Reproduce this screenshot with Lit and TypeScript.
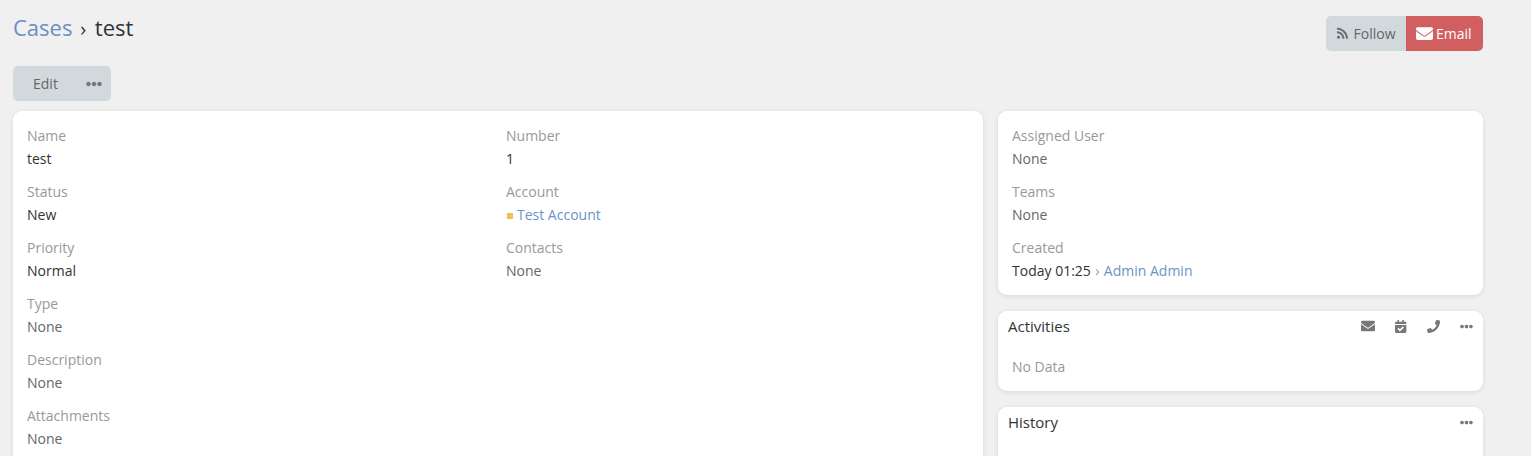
import { LitElement, html, css, svg } from "lit";
import { customElement } from "lit/decorators.js";

const ICON = {
  rss: { vb: "0 0 448 512", d: "M128.081 415.959c0 35.369-28.672 64.041-64.041 64.041S0 451.328 0 415.959s28.672-64.041 64.041-64.041 64.04 28.673 64.04 64.041zm175.66 47.25c-8.354-154.6-132.185-278.587-286.95-286.95C7.656 175.765 0 183.105 0 192.253v48.069c0 8.415 6.49 15.472 14.887 16.018 111.832 7.284 201.473 96.702 208.772 208.772.547 8.397 7.604 14.887 16.018 14.887h48.069c9.149.001 16.489-7.655 15.995-16.79zm144.249.288C439.596 229.677 251.465 40.445 16.503 32.01 7.473 31.686 0 38.981 0 48.016v48.068c0 8.625 6.835 15.645 15.453 15.999 191.179 7.839 344.627 161.316 352.465 352.465.353 8.618 7.373 15.453 15.999 15.453h48.068c9.034-.001 16.329-7.474 16.005-16.504z" },
  envelope: { vb: "0 0 512 512", d: "M502.3 190.8c3.9-3.1 9.7-.2 9.7 4.7V400c0 26.5-21.5 48-48 48H48c-26.5 0-48-21.5-48-48V195.6c0-5 5.7-7.8 9.7-4.7 22.4 17.4 52.1 39.5 154.1 113.6 21.1 15.4 56.7 47.8 92.2 47.6 35.7.3 72-32.8 92.3-47.6 102-74.1 131.6-96.3 154-113.7zM256 320c23.2.4 56.6-29.2 73.4-41.4 132.7-96.3 142.8-104.7 173.4-128.7 5.8-4.5 9.2-11.5 9.2-18.9v-19c0-26.5-21.5-48-48-48H48C21.5 64 0 85.5 0 112v19c0 7.4 3.4 14.3 9.2 18.9 30.6 23.9 40.7 32.4 173.4 128.7 16.8 12.2 50.2 41.8 73.4 41.4z" },
  phone: { vb: "0 0 512 512", d: "M493.4 24.6l-104-24c-11.3-2.6-22.9 3.3-27.5 13.9l-48 112c-4.2 9.8-1.4 21.3 6.9 28l60.6 49.6c-36 76.7-98.9 140.5-177.2 177.2l-49.6-60.6c-6.8-8.3-18.2-11.1-28-6.9l-112 48C3.9 366.5-2 378.1.6 389.4l24 104C27.1 504.2 36.7 512 48 512c256.1 0 464-207.5 464-464 0-11.2-7.7-20.9-18.6-23.4z" },
  calendar: { vb: "0 0 448 512", d: "M436 160H12c-6.627 0-12-5.373-12-12v-36c0-26.51 21.49-48 48-48h48V12c0-6.627 5.373-12 12-12h40c6.627 0 12 5.373 12 12v52h128V12c0-6.627 5.373-12 12-12h40c6.627 0 12 5.373 12 12v52h48c26.51 0 48 21.49 48 48v36c0 6.627-5.373 12-12 12zM12 192h424c6.627 0 12 5.373 12 12v260c0 26.51-21.49 48-48 48H48c-26.51 0-48-21.49-48-48V204c0-6.627 5.373-12 12-12zm333.296 95.947l-28.169-28.398c-4.667-4.705-12.265-4.736-16.97-.068L194.12 364.665l-45.98-46.352c-4.667-4.705-12.266-4.736-16.971-.068l-28.397 28.17c-4.705 4.667-4.736 12.265-.068 16.97l82.601 83.269c4.667 4.705 12.265 4.736 16.97.068l142.953-141.805c4.705-4.667 4.736-12.265.068-16.97z" },
  dots: { vb: "0 0 512 512", d: "M328 256c0 39.8-32.2 72-72 72s-72-32.2-72-72 32.2-72 72-72 72 32.2 72 72zm104-72c-39.8 0-72 32.2-72 72s32.2 72 72 72 72-32.2 72-72-32.2-72-72-72zm-352 0c-39.8 0-72 32.2-72 72s32.2 72 72 72 72-32.2 72-72-32.2-72-72-72z" },
};

function icon(name: keyof typeof ICON, cls: string) {
  const i = ICON[name];
  return html`<svg class=${cls} viewBox=${i.vb} fill="currentColor" aria-hidden="true">${svg`<path d=${i.d}></path>`}</svg>`;
}

@customElement("app-root")
export class AppRoot extends LitElement {
  static styles = css`
    :host {
      display: block;
      height: 456px;
      overflow: hidden;
      background: #f0f0f0;
      font-family: "Open Sans", sans-serif;
      font-size: 14px;
      line-height: 20px;
      color: #333;
    }
    .page { width: 1470px; padding-left: 13px; }
    .top { display: flex; justify-content: space-between; height: 66px; }
    .crumbs { padding-top: 10px; font-size: 22px; line-height: 34px; height: 34px; }
    .crumbs a { color: #6b8fc2; }
    .sep { font-size: 20px; margin: 0 3px 0 2px; }
    .head-btns { display: flex; padding-top: 16px; align-self: flex-start; }
    .btn {
      display: flex; align-items: center; height: 35px; color: #666;
      background: #d1d9dc;
    }
    .follow { border-radius: 5px 0 0 5px; width: 80px; padding-left: 11px; box-sizing: border-box; }
    .email { border-radius: 0 5px 5px 0; width: 77px; padding-left: 10px; box-sizing: border-box; background: #d15f5f; color: #fff; }
    .i-rss { width: 11px; height: 12.6px; margin-right: 5.5px; color: #6d6d6d; }
    .i-env { width: 17px; height: 17px; margin-right: 3px; }
    .edit-row { display: flex; height: 35px; width: 98px; border-radius: 5px; background: #d1d9dc; color: #666; align-items: center; margin-bottom: 10px; }
    .edit { margin-left: 20px; width: 53px; }
    .i-dots { width: 16px; height: 16px; color: #777; }
    .cols { display: grid; grid-template-columns: 970px 485px; column-gap: 15px; align-items: start; }
    .panel { background: #fff; border-radius: 9px; box-shadow: 0 1px 5px rgba(0,0,0,.1); }
    .main { display: grid; grid-template-columns: 479px 1fr; padding: 14px; height: 420px; box-sizing: border-box; }
    .side { display: flex; flex-direction: column; gap: 16px; }
    .field { height: 56px; }
    .label { color: #999; height: 23px; line-height: 22px; }
    .value { color: #333; line-height: 22px; }
    .none { color: #666; }
    a { color: #6b93c7; text-decoration: none; }
    .dot { display: inline-block; width: 6px; height: 6px; background: #f0c350; margin: 0 4px 1px 1px; vertical-align: middle; }
    .arrow { color: #999; margin: 0 0.75px; }
    .assigned { padding: 14px 14px 0; height: 184px; box-sizing: border-box; }
    .titlebar { display: flex; justify-content: space-between; align-items: center; height: 30px; padding: 0 10.5px 0 10px; font-size: 15px; }
    .tools { display: flex; align-items: center; gap: 20px; color: #777; }
    .tools svg { display: block; }
    .t-env { width: 14px; height: 14px; }
    .t-cal { width: 11.4px; height: 13px; }
    .t-phone { width: 13px; height: 13px; }
    .t-dots { width: 13px; height: 13px; }
    .activities { height: 80px; }
    .nodata { color: #999; padding: 15px 14px 0; line-height: 22px; }
    .history { height: 80px; }
  `;

  private field(label: string, value: unknown, cls = "value") {
    return html`<div class="field"><div class="label">${label}</div><div class=${cls}>${value}</div></div>`;
  }

  render() {
    return html`<div class="page">
      <div class="top">
        <div class="crumbs"><a>Cases</a> <span class="sep">›</span> test</div>
        <div class="head-btns">
          <div class="btn follow">${icon("rss", "i-rss")}Follow</div>
          <div class="btn email">${icon("envelope", "i-env")}Email</div>
        </div>
      </div>
      <div class="edit-row"><span class="edit">Edit</span>${icon("dots", "i-dots")}</div>
      <div class="cols">
        <div class="panel main">
          <div>
            ${this.field("Name", "test")}
            ${this.field("Status", "New")}
            ${this.field("Priority", "Normal")}
            ${this.field("Type", "None", "value none")}
            ${this.field("Description", "None", "value none")}
            ${this.field("Attachments", "None", "value none")}
          </div>
          <div>
            ${this.field("Number", "1")}
            ${this.field("Account", html`<span class="dot"></span><a>Test Account</a>`)}
            ${this.field("Contacts", "None", "value none")}
          </div>
        </div>
        <div class="side">
          <div class="panel assigned">
            ${this.field("Assigned User", "None", "value none")}
            ${this.field("Teams", "None", "value none")}
            ${this.field("Created", html`Today 01:25 <span class="arrow">›</span> <a>Admin Admin</a>`)}
          </div>
          <div class="panel activities">
            <div class="titlebar">
              <span>Activities</span>
              <span class="tools">
                ${icon("envelope", "t-env")}
                ${icon("calendar", "t-cal")}
                ${icon("phone", "t-phone")}
                ${icon("dots", "t-dots")}
              </span>
            </div>
            <div class="nodata">No Data</div>
          </div>
          <div class="panel history">
            <div class="titlebar">
              <span>History</span>
              <span class="tools">${icon("dots", "t-dots")}</span>
            </div>
          </div>
        </div>
      </div>
    </div>`;
  }
}
